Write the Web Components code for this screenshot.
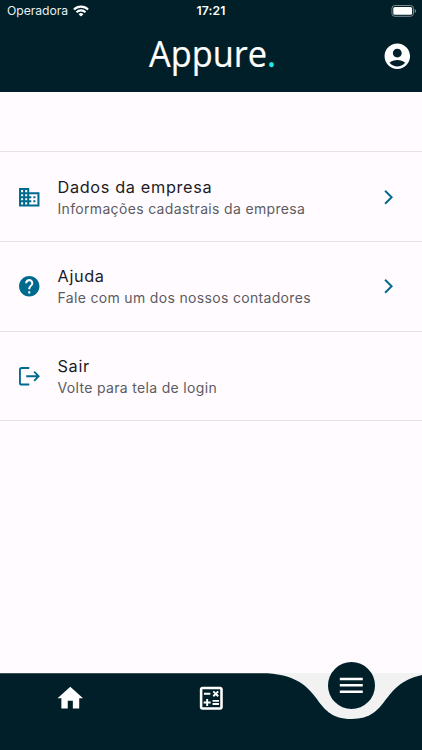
<!DOCTYPE html>
<html lang="pt-BR">
<head>
<meta charset="utf-8">
<title>Appure</title>
<style>
html,body{margin:0;height:100%}
body{font-family:Inter,"Liberation Sans",sans-serif;background:#fffbff;overflow:hidden}
</style>
</head>
<body>
<appure-screen></appure-screen>
<script>
const icons = {
  account: '<path d="M12 2C6.48 2 2 6.48 2 12s4.48 10 10 10 10-4.48 10-10S17.52 2 12 2zm0 4c1.93 0 3.5 1.57 3.5 3.5S13.93 13 12 13s-3.500-1.570-3.500-3.500S10.070 6 12 6zm0 14c-2.030 0-4.430-.820-6.140-2.880C7.550 15.800 9.680 15 12 15s4.450.800 6.140 2.120C16.430 19.180 14.030 20 12 20z"/>',
  business: '<path d="M12 7V3H2v18h20V7H12zM6 19H4v-2h2v2zm0-4H4v-2h2v2zm0-4H4V9h2v2zm0-4H4V5h2v2zm4 12H8v-2h2v2zm0-4H8v-2h2v2zm0-4H8V9h2v2zm0-4H8V5h2v2zm10 12h-8v-2h2v-2h-2v-2h2v-2h-2V9h8v10zm-2-8h-2v2h2v-2zm0 4h-2v2h2v-2z"/>',
  help: '<path d="M12 2C6.480 2 2 6.480 2 12s4.480 10 10 10 10-4.480 10-10S17.520 2 12 2zm1 17h-2v-2h2v2zm2.070-7.750l-.900.920C13.450 12.900 13 13.500 13 15h-2v-.500c0-1.100.450-2.100 1.170-2.830l1.240-1.260c.370-.360.590-.860.590-1.410 0-1.100-.900-2-2-2s-2 .900-2 2H8c0-2.210 1.790-4 4-4s4 1.790 4 4c0 .880-.360 1.680-.930 2.250z"/>',
  logout: '<path d="M12 3.900H4.500Q2.900 3.900 2.900 5.500v13Q2.900 20.100 4.500 20.100H12" fill="none" stroke="currentColor" stroke-width="1.800"/><path d="M9 12h12M16.800 7.500 21.200 12l-4.400 4.500" fill="none" stroke="currentColor" stroke-width="1.800"/>',
  chevron: '<path d="M8.900 5.600 15.300 12l-6.400 6.400" fill="none" stroke="currentColor" stroke-width="1.900"/>',
  home: '<path d="M10 20v-6h4v6h5v-8h3L12 3 2 12h3v8z"/>',
  calculate: '<path d="M19 3H5c-1.100 0-2 .900-2 2v14c0 1.100.900 2 2 2h14c1.100 0 2-.900 2-2V5c0-1.100-.900-2-2-2zm0 16H5V5h14v14z"/><path d="M6.250 7.720h5v1.500h-5zM13 15.750h5v1.500h-5zM13 13.250h5v1.500h-5zM8 18h1.500v-2h2v-1.500h-2v-2H8v2H6V16h2zM14.090 10.950l1.410-1.410 1.410 1.410 1.060-1.060-1.410-1.420 1.410-1.410L16.910 6 15.500 7.410 14.090 6l-1.060 1.060 1.410 1.410-1.410 1.420z"/>',
  menu: '<path d="M3 18h18v-2H3v2zm0-5h18v-2H3v2zm0-7v2h18V6H3z"/>'
};
function define(name, html){
  customElements.define(name, class extends HTMLElement{
    constructor(){
      super();
      const t=document.createElement('template');
      t.innerHTML=html;
      this.attachShadow({mode:'open'}).append(t.content.cloneNode(true));
    }
  });
}
customElements.define('app-icon', class extends HTMLElement{
  connectedCallback(){
    if(this.shadowRoot) return;
    this.attachShadow({mode:'open'}).innerHTML=`<style>:host{display:block;flex:none;width:var(--size,24.5px);height:var(--size,24.5px)}svg{display:block;width:100%;height:100%;fill:currentColor}</style><svg viewBox="0 0 24 24">${icons[this.getAttribute('name')]}</svg>`;
  }
});
define('status-bar',`<style>
:host{display:grid;grid-template-columns:1fr auto 1fr;align-items:center;height:22px;color:#fff;font-size:12.2px;line-height:22px}
.carrier{display:flex;align-items:center;gap:4.500px;padding-left:7px;color:#e9eef0;letter-spacing:-.04px}
.time{font-weight:600;letter-spacing:.1px}
.battery{justify-self:end;margin-right:5px}
svg{display:block}
</style>
<div class="carrier"><span>Operadora</span><svg width="16" height="12" viewBox="0 0 16 12" fill="none" stroke="#fff" stroke-width="2.100"><path d="M.9 4.500a10.300 10.300 0 0 1 14.200 0M3.500 7.200a6.500 6.500 0 0 1 9 0"/><path d="M8 11.600 5.600 9.200a3.500 3.500 0 0 1 4.800 0z" fill="#fff" stroke="none"/></svg></div>
<span class="time">17:21</span>
<svg class="battery" width="26" height="12" viewBox="0 0 26 12"><rect x=".9" y=".5" width="21.600" height="10.800" rx="3" fill="none" stroke="#7c8b90"/><rect x="2.300" y="2" width="18.800" height="7.800" rx="1.600" fill="#fff"/><path d="M23.700 4v4q1.400-.6 1.400-2t-1.400-2" fill="#7c8b90"/></svg>`);
define('app-header',`<style>
:host{display:block;height:92px;background:#001f28}
.bar{display:grid;grid-template-columns:1fr 128px 1fr;align-items:center;height:68px}
.logo{grid-column:2;display:flex;width:max-content;margin-left:2.200px;margin-top:-6px;font:36.500px/48px "Open Sans","Noto Sans",sans-serif;color:#fff;-webkit-text-stroke:.2px currentColor;transform:scaleX(.94);transform-origin:0 50%}
.dot{color:#20eadd;-webkit-text-stroke:.4px currentColor}
app-icon{--size:30.600px;color:#fff;justify-self:end;margin-right:9.500px}
</style><status-bar></status-bar>
<div class="bar"><div class="logo"><span>Appure</span><span class="dot">.</span></div>
<app-icon name="account"></app-icon></div>`);
define('menu-row',`<style>
:host{display:flex;align-items:center;box-sizing:border-box;height:89.600px;padding:.3px 22px 0 16.500px;border-bottom:1px solid #e8e0e5;color:#006a8e}
.text{flex:1;margin-left:16.500px}
.title{font-size:16.300px;line-height:24px;letter-spacing:.65px;color:#1c1b1f;font-weight:420}
.sub{font-size:14px;line-height:20.500px;letter-spacing:.33px;color:#5c5b5f}
</style><slot name="icon"></slot><div class="text"><div class="title"><slot name="title"></slot></div><div class="sub"><slot></slot></div></div><slot name="end"></slot>`);
define('bottom-nav',`<style>
:host{display:grid;grid-template-columns:repeat(3,1fr);position:relative;height:77px;background:#f2f2f2;color:#fff}
.shape{position:absolute;inset:0;display:block}
.item{position:relative;height:51px;display:grid;place-items:center}
app-icon{--size:30.600px}
.active{width:47px;height:47px;border-radius:50%;background:#001f28;display:grid;place-items:center;justify-self:center;margin-top:-11.200px}
</style><svg class="shape" width="422" height="77" viewBox="0 0 422 77"><path fill="#001f28" d="M0 .2H267.300C326.400 4 309.500 46 351.700 46C393.900 46 377 4 436 .2V77H0z"/></svg>
<div class="item"><app-icon name="home"></app-icon></div>
<div class="item"><app-icon name="calculate"></app-icon></div>
<div class="item active"><app-icon name="menu"></app-icon></div>`);
define('appure-screen',`<style>
:host{display:flex;flex-direction:column;width:422px;height:750px;background:#fffbff}
main{flex:1}
.top{height:60.400px;box-sizing:border-box;border-bottom:1px solid #e8e0e5}
</style><app-header></app-header>
<main><div class="top"></div>
<menu-row><app-icon slot="icon" name="business"></app-icon><span slot="title">Dados da empresa</span>Informações cadastrais da empresa<app-icon slot="end" name="chevron"></app-icon></menu-row>
<menu-row><app-icon slot="icon" name="help"></app-icon><span slot="title">Ajuda</span>Fale com um dos nossos contadores<app-icon slot="end" name="chevron"></app-icon></menu-row>
<menu-row><app-icon slot="icon" name="logout"></app-icon><span slot="title">Sair</span>Volte para tela de login</menu-row>
</main><bottom-nav></bottom-nav>`);
</script>
</body>
</html>
